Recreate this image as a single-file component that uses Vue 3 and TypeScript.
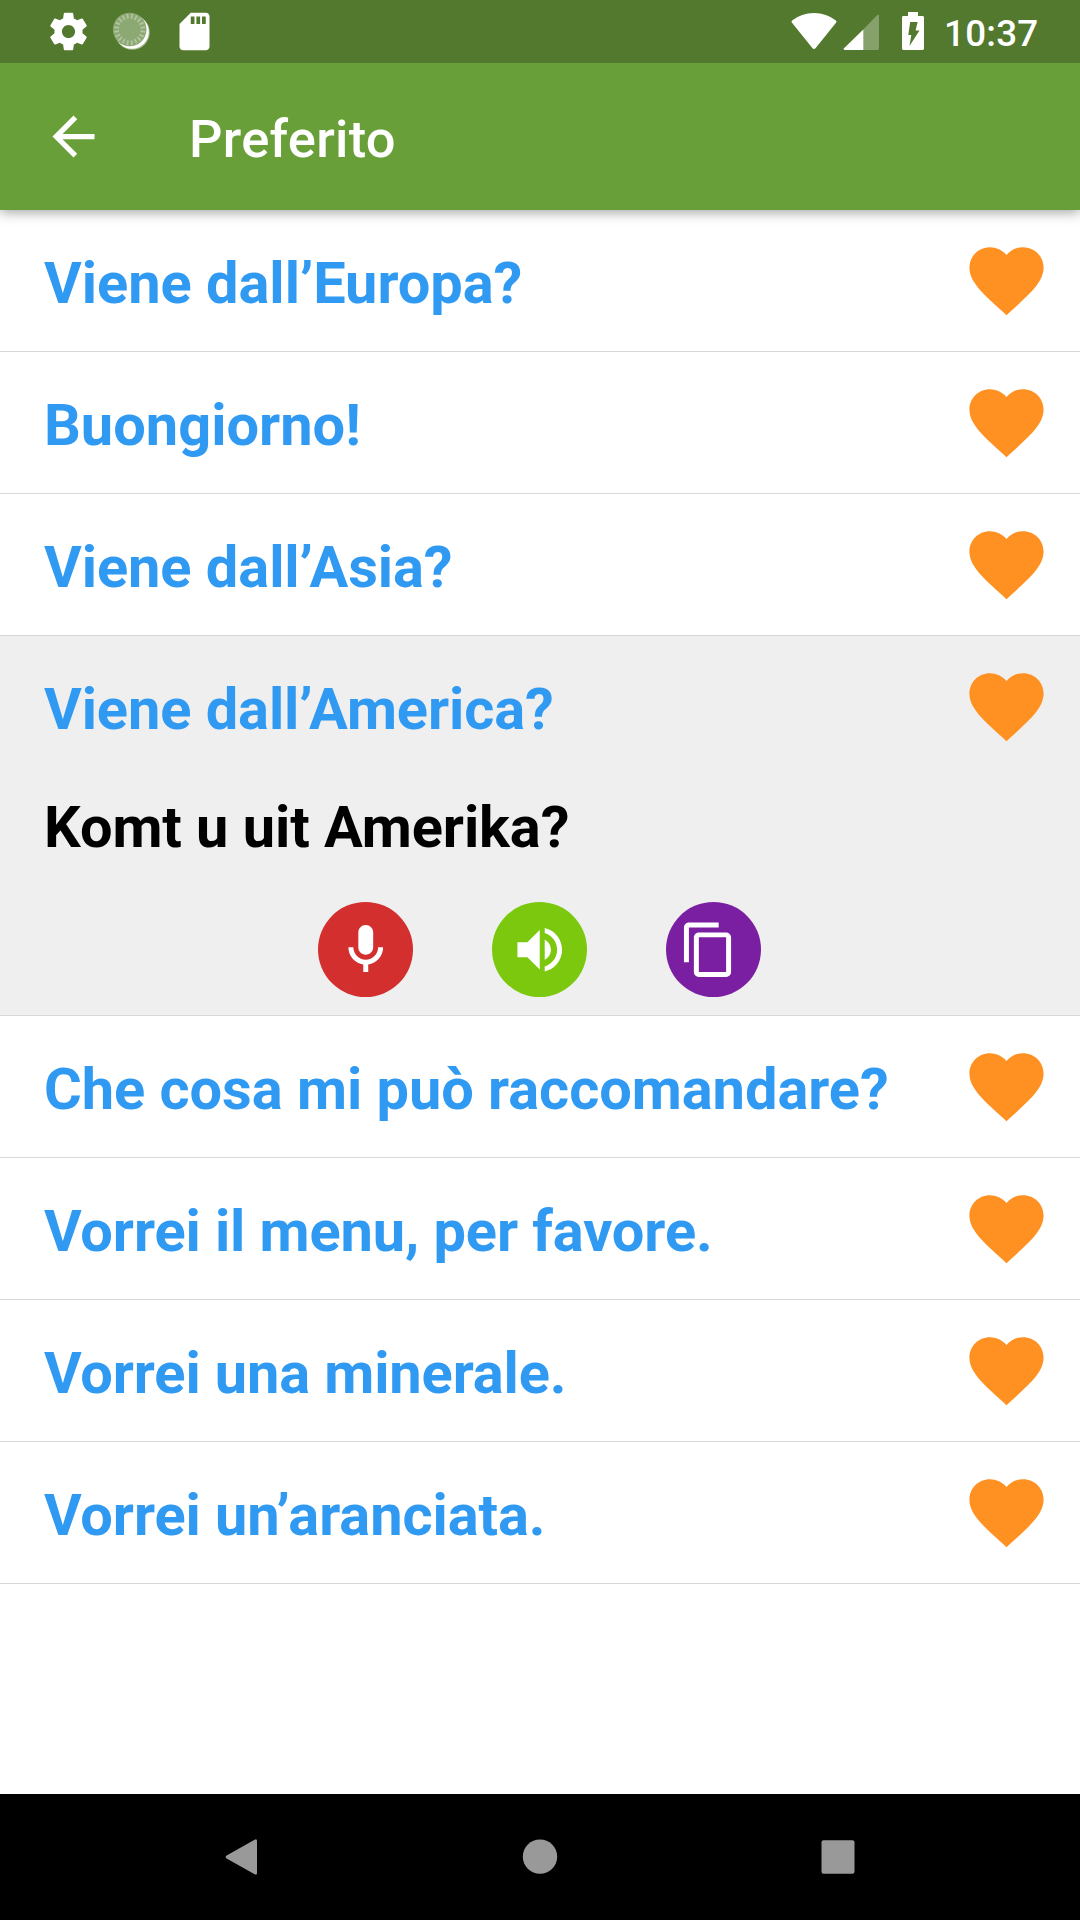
<script setup lang="ts">
import { ref } from 'vue'

interface Phrase {
  text: string
  tracking: number
  translation?: string
}

const phrases: Phrase[] = [
  { text: 'Viene dall’Europa?', tracking: -0.02 },
  { text: 'Buongiorno!', tracking: 0 },
  { text: 'Viene dall’Asia?', tracking: -0.05 },
  { text: 'Viene dall’America?', tracking: -0.08, translation: 'Komt u uit Amerika?' },
  { text: 'Che cosa mi può raccomandare?', tracking: -0.04 },
  { text: 'Vorrei il menu, per favore.', tracking: -0.1 },
  { text: 'Vorrei una minerale.', tracking: -0.12 },
  { text: 'Vorrei un’aranciata.', tracking: -0.08 },
]

const expanded = ref(3)
const ticks = Array.from({ length: 20 }, (_, i) => i * 18)
</script>

<template>
  <div class="screen">
    <header class="status">
      <div class="status-left">
        <svg class="s-gear" viewBox="0 0 24 24"><path d="M19.43 12.98c.04-.32.07-.64.07-.98s-.03-.66-.07-.98l2.11-1.65c.19-.15.24-.42.12-.64l-2-3.46c-.12-.22-.39-.3-.61-.22l-2.49 1c-.52-.4-1.08-.73-1.69-.98l-.38-2.65C14.46 2.18 14.25 2 14 2h-4c-.25 0-.46.18-.49.42l-.38 2.65c-.61.25-1.17.59-1.69.98l-2.49-1c-.23-.09-.49 0-.61.22l-2 3.46c-.13.22-.07.49.12.64l2.11 1.65c-.04.32-.07.65-.07.98s.03.66.07.98l-2.11 1.65c-.19.15-.24.42-.12.64l2 3.46c.12.22.39.3.61.22l2.49-1c.52.4 1.08.73 1.69.98l.38 2.65c.03.24.24.42.49.42h4c.25 0 .46-.18.49-.42l.38-2.65c.61-.25 1.17-.59 1.69-.98l2.49 1c.23.09.49 0 .61-.22l2-3.46c.12-.22.07-.49-.12-.64l-2.11-1.65zM12 15.5c-1.93 0-3.5-1.57-3.5-3.5s1.57-3.5 3.5-3.5 3.5 1.57 3.5 3.5-1.57 3.5-3.5 3.5z" /></svg>
        <svg class="s-spin" viewBox="0 0 40 40">
          <circle cx="21.4" cy="21.4" r="17.3" fill="#a9bf95" />
          <circle cx="20.8" cy="20.8" r="17" fill="#fff" />
          <circle cx="18.7" cy="18.5" r="16.8" fill="#8ca973" />
          <g stroke="#b3c5a2" stroke-width="1.7">
            <line v-for="a in ticks" :key="a" x1="18.7" y1="2.8" x2="18.7" y2="7.6" :transform="`rotate(${a + 9} 18.7 18.5)`" />
          </g>
        </svg>
        <svg class="s-sd" viewBox="0 0 24 24"><path d="M18 2h-8L4.02 8 4 20c0 1.1.9 2 2 2h12c1.1 0 2-.9 2-2V4c0-1.1-.9-2-2-2zm-6 6h-2V4h2v4zm3 0h-2V4h2v4zm3 0h-2V4h2v4z" /></svg>
      </div>
      <div class="status-right">
        <svg class="s-wifi" viewBox="0 0 46 38"><path d="M1.1 8.6Q10.3 1 23 1T44.9 8.6Q46 9.5 45.2 10.6L24.5 36.2Q23 37.8 21.5 36.2L.8 10.6Q0 9.5 1.1 8.6Z" /></svg>
        <svg class="s-signal" viewBox="0 0 36 36">
          <path d="M20 15.8L34 1.2Q36 0 36 2V34Q36 36 34 36H20Z" opacity=".3" />
          <path d="M20.3 15.4V36H1.6Q0 35.4 1 34.2Z" />
        </svg>
        <svg class="s-batt" viewBox="0 0 22 38"><path fill-rule="evenodd" d="M6 0H16V4H20.6Q22 4 22 5.4V36.6Q22 38 20.6 38H1.4Q0 38 0 36.6V5.4Q0 4 1.4 4H6ZM8.2 10L6.3 23H9.3L7.5 34L17.5 18.5H13.6L15.6 10Z" /></svg>
        <span class="clock">10:37</span>
      </div>
    </header>

    <div class="toolbar">
      <svg class="back" viewBox="0 0 24 24"><path d="M20 11H7.83l5.59-5.59L12 4l-8 8 8 8 1.41-1.41L7.83 13H20v-2z" /></svg>
      <h1 class="title">Preferito</h1>
    </div>

    <main class="list">
      <section v-for="(p, i) in phrases" :key="i" class="item" :class="{ open: expanded === i }">
        <div class="row">
          <span class="phrase" :style="{ letterSpacing: p.tracking + 'px' }">{{ p.text }}</span>
          <svg class="heart" viewBox="0 0 24 24"><path d="M12 21.35l-1.45-1.32C5.4 15.36 2 12.28 2 8.5 2 5.42 4.42 3 7.5 3c1.74 0 3.41.81 4.5 2.09C13.09 3.81 14.76 3 16.5 3 19.58 3 22 5.42 22 8.5c0 3.78-3.4 6.86-8.55 11.54L12 21.35z" /></svg>
        </div>
        <template v-if="expanded === i">
          <div class="translation">{{ p.translation }}</div>
          <div class="actions">
            <button class="act red" aria-label="mic">
              <svg viewBox="0 0 24 24"><path d="M12 14c1.66 0 3-1.34 3-3V5c0-1.66-1.34-3-3-3S9 3.34 9 5v6c0 1.66 1.34 3 3 3zM17 11c0 2.76-2.24 5-5 5s-5-2.24-5-5H5c0 3.53 2.61 6.43 6 6.92V21h2v-3.08c3.39-.49 6-3.39 6-6.92h-2z" /></svg>
            </button>
            <button class="act green" aria-label="audio">
              <svg viewBox="0 0 24 24"><path d="M3 9v6h4l5 5V4L7 9H3zm13.5 3c0-1.77-1.02-3.29-2.5-4.03v8.05c1.48-.73 2.5-2.25 2.5-4.02zM14 3.23v2.06c2.89.86 5 3.54 5 6.71s-2.11 5.85-5 6.71v2.06c4.01-.91 7-4.49 7-8.77s-2.99-7.86-7-8.77z" /></svg>
            </button>
            <button class="act purple" aria-label="copy">
              <svg viewBox="0 0 24 24"><path d="M16 1H4c-1.1 0-2 .9-2 2v14h2V3h12V1zm3 4H8c-1.1 0-2 .9-2 2v14c0 1.1.9 2 2 2h11c1.1 0 2-.9 2-2V7c0-1.1-.9-2-2-2zm0 16H8V7h11v14z" /></svg>
            </button>
          </div>
        </template>
      </section>
    </main>

    <nav class="navbar">
      <svg viewBox="0 0 36 36"><path d="M32.6.8Q35 -.6 35 2V34Q35 36.6 32.6 35.2L4.6 19.6Q2.6 18 4.6 16.4Z" /></svg>
      <svg viewBox="0 0 36 36"><circle cx="18" cy="17.6" r="17.2" /></svg>
      <svg viewBox="0 0 36 36"><rect x=".5" y="1.3" width="33" height="33.4" rx="2" /></svg>
    </nav>
  </div>
</template>

<style>
body {
  margin: 0;
  background: #fff;
}
</style>

<style scoped>
.screen {
  width: 1080px;
  height: 1920px;
  display: flex;
  flex-direction: column;
  overflow: hidden;
  background: #fff;
  font-family: Roboto, "Liberation Sans", sans-serif;
}
svg {
  display: block;
  flex: none;
}
.status {
  flex: none;
  height: 63px;
  display: flex;
  justify-content: space-between;
  position: relative;
  z-index: 2;
  background: #52792d;
  fill: #fff;
}
.status-left {
  display: flex;
  align-items: flex-start;
  padding: 9px 0 0 46px;
}
.s-gear,
.s-sd {
  width: 45px;
  height: 45px;
}
.s-spin {
  width: 40px;
  height: 40px;
  margin: 2px 21px 0 20px;
}
.status-right {
  display: flex;
  align-items: flex-start;
  padding: 12px 42px 0 0;
}
.s-wifi {
  width: 46px;
  height: 38px;
  margin-right: 6px;
}
.s-signal {
  width: 36px;
  height: 36px;
  margin: 2px 23px 0 0;
}
.s-batt {
  width: 22px;
  height: 38px;
  margin-right: 20px;
}
.clock {
  width: 94px;
  height: 43px;
  font-size: 36.75px;
  line-height: 43px;
  font-weight: 500;
  letter-spacing: 0.25px;
  color: #fff;
  white-space: nowrap;
}
.toolbar {
  flex: none;
  height: 147px;
  display: flex;
  align-items: center;
  padding-left: 42px;
  box-sizing: border-box;
  background: #689f38;
  position: relative;
  z-index: 1;
  box-shadow: 0 2px 12px rgba(0, 0, 0, 0.38);
}
.back {
  width: 63px;
  height: 63px;
  fill: #fff;
}
.title {
  margin: 5px 0 0 84px;
  font-size: 52.5px;
  line-height: 62px;
  font-weight: 500;
  letter-spacing: 0.28px;
  color: #fff;
}
.list {
  flex: 1;
}
.item {
  border-bottom: 1px solid #d8d8d8;
}
.item.open {
  height: 379px;
  background: #efefef;
}
.row {
  height: 141px;
  display: flex;
  align-items: center;
  justify-content: space-between;
  padding: 0 29px 0 44px;
}
.phrase,
.translation {
  font-size: 57.75px;
  line-height: 68px;
  font-weight: 700;
  white-space: nowrap;
}
.phrase {
  margin-top: 5px;
  color: #309af2;
}
.heart {
  width: 89px;
  height: 89px;
  fill: #ff9122;
}
.translation {
  margin-top: 16px;
  padding-left: 44px;
  letter-spacing: -0.07px;
  color: #000;
}
.actions {
  display: flex;
  justify-content: center;
  gap: 79px;
  margin-top: 41px;
  padding-right: 1px;
}
.act {
  width: 95px;
  height: 95px;
  padding: 0;
  border: 0;
  border-radius: 50%;
  display: flex;
  align-items: center;
  justify-content: center;
}
.act svg {
  width: 59.5px;
  height: 59.5px;
  fill: #fff;
}
.red {
  background: #d32f2f;
}
.green {
  background: #7bc80e;
}
.purple {
  background: #7b1fa2;
}
.purple svg {
  margin-right: 10px;
}
.navbar {
  flex: none;
  height: 126px;
  display: flex;
  align-items: center;
  justify-content: space-between;
  padding: 0 223px 0 222px;
  box-sizing: border-box;
  background: #000;
  fill: #999;
}
.navbar svg {
  width: 36px;
  height: 36px;
}
</style>
